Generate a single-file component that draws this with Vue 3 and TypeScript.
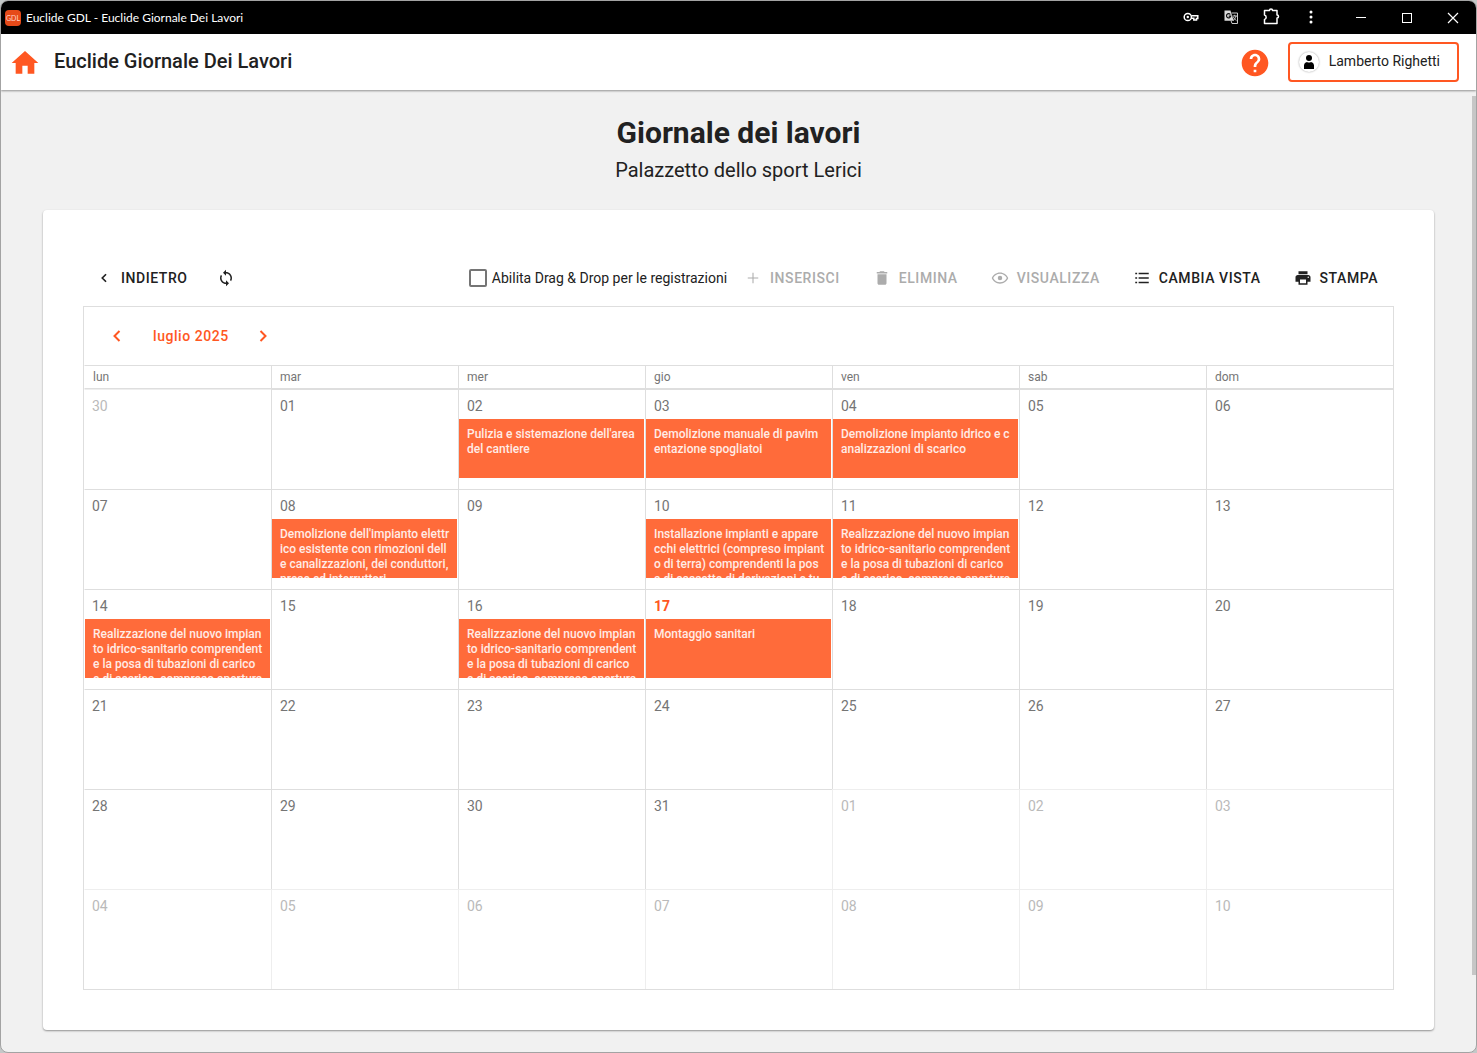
<script setup lang="ts">
import { ref } from 'vue'

interface Action {
  label: string
  icon: string
  disabled: boolean
}

interface Day {
  key: string
  label: string
  outside: boolean
  today: boolean
  entry?: string
}

const icons: Record<string, string> = {
  plus: 'M19 12.7h-6.3V19h-1.4v-6.3H5v-1.4h6.3V5h1.4v6.3H19z',
  trash: 'M6 19c0 1.1.9 2 2 2h8c1.1 0 2-.9 2-2V7H6v12zM19 4h-3.500l-1-1h-5l-1 1H5v2h14V4z',
  list: 'M3 5h2.500v2H3zM3 11h2.500v2H3zM3 17h2.500v2H3zM7.500 5H21v2H7.500zM7.500 11H21v2H7.500zM7.500 17H21v2H7.500z',
  print: 'M19 8H5c-1.660 0-3 1.340-3 3v6h4v4h12v-4h4v-6c0-1.660-1.340-3-3-3zm-3 11H8v-5h8v5zm3-7c-.55 0-1-.45-1-1s.45-1 1-1 1 .45 1 1-.45 1-1 1zm-1-9H6v4h12V3z',
  eye: 'M12 4.500C7 4.500 2.730 7.610 1 12c1.730 4.390 6 7.500 11 7.500s9.270-3.110 11-7.500c-1.730-4.390-6-7.500-11-7.500zm0 13.300c-3.900 0-7.400-2.200-9.100-5.800C4.600 8.400 8.100 6.200 12 6.200s7.400 2.200 9.100 5.800c-1.700 3.600-5.200 5.800-9.100 5.800zM12 9a3 3 0 1 0 0 6 3 3 0 0 0 0-6z',
}

const actions: Action[] = [
  { label: 'INSERISCI', icon: 'plus', disabled: true },
  { label: 'ELIMINA', icon: 'trash', disabled: true },
  { label: 'VISUALIZZA', icon: 'eye', disabled: true },
  { label: 'CAMBIA VISTA', icon: 'list', disabled: false },
  { label: 'STAMPA', icon: 'print', disabled: false },
]

const weekdays = ['lun', 'mar', 'mer', 'gio', 'ven', 'sab', 'dom']

const plumbing =
  'Realizzazione del nuovo impianto idrico-sanitario comprendente la posa di tubazioni di carico e di scarico, compreso apertura'

const entries: Record<number, string> = {
  2: "Pulizia e sistemazione dell'area del cantiere",
  3: 'Demolizione manuale di pavim\nentazione spogliatoi',
  4: 'Demolizione impianto idrico e canalizzazioni di scarico',
  8: "Demolizione dell'impianto elettrico esistente con rimozioni delle canalizzazioni, dei conduttori, prese ed interruttori",
  10: 'Installazione impianti e appare\ncchi elettrici (compreso impiant\no di terra) comprendenti la pos\na di cassette di derivazioni e tu',
  11: plumbing,
  14: plumbing,
  16: plumbing,
  17: 'Montaggio sanitari',
}

const month = 6
const today = 17

const weeks: Day[][] = Array.from({ length: 6 }, (_, w) =>
  Array.from({ length: 7 }, (_, d) => {
    const date = new Date(2025, month, w * 7 + d)
    const number = date.getDate()
    const outside = date.getMonth() !== month
    return {
      key: `${date.getMonth()}-${number}`,
      label: String(number).padStart(2, '0'),
      outside,
      today: !outside && number === today,
      entry: outside ? undefined : entries[number],
    }
  }),
)

const dragEnabled = ref(false)
</script>

<template>
  <div class="window">
    <div class="titlebar">
      <span class="app-badge">GDL</span>
      <span class="app-name">Euclide GDL - Euclide Giornale Dei Lavori</span>
      <div class="tb-group">
        <button class="tb-btn" type="button" aria-label="Password">
          <svg width="16" height="16" viewBox="0 0 16 16" fill="none" stroke="#fff" stroke-width="1.500">
            <circle cx="4.800" cy="8" r="3.600" />
            <circle cx="4.800" cy="8" r="1.200" fill="#fff" stroke="none" />
            <path d="M8.300 6.800h6.500v2.600h-1.300v1.700h-2.700V9.300H8.300" />
          </svg>
        </button>
        <button class="tb-btn" type="button" aria-label="Traduci">
          <svg width="16" height="16" viewBox="0 0 16 16">
            <path fill="#ddd" d="M1.500 1.500h6l3.200 10.200H1.500z" />
            <path fill="none" stroke="#ccc" d="M8.500 4h6v10.500H9l-1-2.800M9.500 7h4.500M11.700 5.800V7M13 7c-.4 2-1.500 3.500-3 4.500M10.500 8c.5 1.500 1.600 2.700 3 3.700" />
            <path fill="none" stroke="#111" stroke-width="1.200" d="M7.300 5.500A2.100 2.100 0 1 0 7.700 7.200H5.700" />
          </svg>
        </button>
        <button class="tb-btn" type="button" aria-label="Estensioni">
          <svg width="18" height="18" viewBox="0 0 18 18" fill="none" stroke="#fff" stroke-width="1.500" stroke-linejoin="round">
            <path d="M2.500 2.500h5a1.500 1.500 0 0 1 3 0H15v4.500a1.500 1.500 0 0 1 0 3V15.500H2.500v-4c2.200-.3 2.200-4.200 0-4.500z" />
          </svg>
        </button>
        <button class="tb-btn" type="button" aria-label="Menu">
          <svg width="16" height="16" viewBox="0 0 16 16" fill="#fff">
            <circle cx="8" cy="3" r="1.500" /><circle cx="8" cy="8" r="1.500" /><circle cx="8" cy="13" r="1.500" />
          </svg>
        </button>
      </div>
      <button class="tb-btn win" type="button" aria-label="Riduci a icona">
        <svg width="12" height="12" viewBox="0 0 12 12"><path d="M1 5.500h10" stroke="#fff" /></svg>
      </button>
      <button class="tb-btn win" type="button" aria-label="Ingrandisci">
        <svg width="12" height="12" viewBox="0 0 12 12"><rect x="1.500" y="1.500" width="9" height="9" fill="none" stroke="#fff" /></svg>
      </button>
      <button class="tb-btn win" type="button" aria-label="Chiudi">
        <svg width="12" height="12" viewBox="0 0 12 12"><path d="M1 1l10 10M11 1L1 11" stroke="#fff" stroke-width="1.200" /></svg>
      </button>
    </div>

    <header class="header">
      <a class="home" href="#" aria-label="Home">
        <svg width="32" height="32" viewBox="0 0 24 24" fill="#ff5722"><path d="M10 20v-6h4v6h5v-8h3L12 3 2 12h3v8z" /></svg>
      </a>
      <span class="header-title">Euclide Giornale Dei Lavori</span>
      <button class="help" type="button" aria-label="Aiuto">
        <svg width="32" height="32" viewBox="0 0 24 24" fill="#ff5722">
          <path d="M12 2C6.480 2 2 6.480 2 12s4.480 10 10 10 10-4.480 10-10S17.520 2 12 2zm1 17h-2v-2h2v2zm2.070-7.750l-.9.920C13.450 12.900 13 13.500 13 15h-2v-.5c0-1.100.45-2.100 1.170-2.830l1.240-1.260c.37-.36.59-.86.59-1.410 0-1.100-.9-2-2-2s-2 .9-2 2H8c0-2.210 1.790-4 4-4s4 1.790 4 4c0 .88-.36 1.680-.93 2.250z" />
        </svg>
      </button>
      <button class="user" type="button">
        <span class="avatar">
          <svg width="12" height="16" viewBox="0 0 12 16"><circle cx="6" cy="4" r="3" /><path d="M1 15v-3.500C1 9.500 2.500 8.300 4 8c1.200.7 2.800.7 4 0 1.500.3 3 1.500 3 3.500V15z" /></svg>
        </span>
        <span class="user-name">Lamberto Righetti</span>
      </button>
    </header>

    <main class="main">
      <h1>Giornale dei lavori</h1>
      <h2>Palazzetto dello sport Lerici</h2>

      <section class="card">
        <div class="toolbar">
          <button class="btn back" type="button">
            <svg width="18" height="18" viewBox="0 0 24 24"><path fill="none" stroke="currentColor" stroke-width="2.200" d="M14.700 7l-5 5 5 5" /></svg>
            <span>INDIETRO</span>
          </button>
          <button class="btn refresh" type="button" aria-label="Aggiorna">
            <svg width="18" height="18" viewBox="0 0 24 24" fill="currentColor"><path d="M12 4V1L8 5l4 4V6c3.310 0 6 2.690 6 6 0 1.010-.25 1.970-.7 2.800l1.460 1.460C19.540 15.030 20 13.570 20 12c0-4.420-3.580-8-8-8zm0 14c-3.310 0-6-2.690-6-6 0-1.010.25-1.970.7-2.800L5.240 7.740C4.460 8.970 4 10.430 4 12c0 4.420 3.580 8 8 8v3l4-4-4-4v3z" /></svg>
          </button>
          <label class="check" for="drag">
            <input id="drag" v-model="dragEnabled" type="checkbox" />
            <span>Abilita Drag &amp; Drop per le registrazioni</span>
          </label>
          <button v-for="a in actions" :key="a.label" class="btn" type="button" :disabled="a.disabled">
            <svg width="18" height="18" viewBox="0 0 24 24" fill="currentColor"><path :d="icons[a.icon]" /></svg>
            <span>{{ a.label }}</span>
          </button>
        </div>

        <div class="calendar">
          <div class="nav">
            <button class="nav-btn" type="button" aria-label="Mese precedente">
              <svg width="18" height="18" viewBox="0 0 18 18"><path d="M11.500 4L6.500 9l5 5" /></svg>
            </button>
            <button class="nav-btn caption" type="button">luglio 2025</button>
            <button class="nav-btn" type="button" aria-label="Mese successivo">
              <svg width="18" height="18" viewBox="0 0 18 18"><path d="M6.500 4l5 5-5 5" /></svg>
            </button>
          </div>
          <table>
            <thead>
              <tr>
                <th v-for="w in weekdays" :key="w" scope="col">{{ w }}</th>
              </tr>
            </thead>
            <tbody>
              <tr v-for="(week, i) in weeks" :key="i">
                <td v-for="day in week" :key="day.key" :class="{ outside: day.outside, today: day.today }">
                  <div class="date">{{ day.label }}</div>
                  <div v-if="day.entry" class="entry">{{ day.entry }}</div>
                </td>
              </tr>
            </tbody>
          </table>
        </div>
      </section>
      <div class="scroll-thumb"></div>
    </main>
  </div>
</template>

<style>
body {
  margin: 0;
  background: #c4c8c8;
}
</style>

<style scoped>
.window {
  box-sizing: border-box;
  min-height: 100vh;
  display: flex;
  flex-direction: column;
  border: 1px solid #a3a3a3;
  border-radius: 8px;
  overflow: hidden;
  background: #f1f1f1;
  color: #212121;
  font-family: Roboto, 'Liberation Sans', sans-serif;
  font-size: 14px;
}

button {
  border: 0;
  padding: 0;
  background: none;
  color: inherit;
  font: inherit;
  display: flex;
  align-items: center;
  justify-content: center;
}

svg {
  display: block;
  flex: none;
}

.titlebar {
  height: 33px;
  display: flex;
  align-items: center;
  background: #000;
  color: #fff;
  font-family: Lato, 'Open Sans', sans-serif;
  font-size: 12px;
}

.app-badge {
  width: 16px;
  height: 16px;
  margin: 0 5px 0 4px;
  border-radius: 4px;
  background: #e64a19;
  color: #ffd9cc;
  font-size: 7px;
  line-height: 16px;
  text-align: center;
}

.app-name {
  flex: 1;
}

.tb-group {
  display: flex;
  margin-right: 7px;
  padding-bottom: 1px;
}

.tb-btn {
  width: 40px;
  height: 32px;
}

.tb-btn.win {
  width: 46px;
}

.header {
  position: relative;
  height: 56px;
  display: flex;
  align-items: center;
  padding: 0 17px 0 8px;
  background: #fff;
  box-shadow: 0 1px 2px rgba(0, 0, 0, 0.4);
}

.home,
.help {
  padding-top: 1px;
}

.header-title {
  flex: 1;
  margin-left: 13px;
  padding-bottom: 2px;
  font-size: 20px;
  font-weight: 500;
}

.help {
  margin-right: 17px;
}

.user {
  box-sizing: border-box;
  height: 40px;
  padding: 0 17px 0 9px;
  gap: 10px;
  border: 2px solid #ff5722;
  border-radius: 4px;
}

.user-name {
  padding-bottom: 2px;
}

.avatar {
  width: 20px;
  height: 20px;
  display: flex;
  align-items: center;
  justify-content: center;
  border-radius: 50%;
  box-shadow: 0 0 2px rgba(0, 0, 0, 0.4);
}

.main {
  position: relative;
  flex: 1;
  padding: 25px 42px 21px;
}

h1,
h2 {
  margin: 0;
  text-align: center;
}

h1 {
  font-size: 30px;
  line-height: 36px;
  font-weight: 700;
}

h2 {
  margin: 7px 0 28px;
  font-size: 20px;
  line-height: 24px;
  font-weight: 400;
}

.card {
  padding: 40px;
  border-radius: 4px;
  background: #fff;
  box-shadow: 0 1px 2px rgba(0, 0, 0, 0.4);
}

.toolbar {
  height: 56px;
  display: flex;
  align-items: center;
  gap: 1px;
}

.btn {
  height: 36px;
  padding: 0 16px;
  gap: 8px;
  font-weight: 500;
  letter-spacing: 0.04em;
}

.btn:disabled {
  color: #acacac;
}

.back {
  padding-left: 12px;
}

.refresh {
  padding: 0 12px;
}

.check {
  display: flex;
  align-items: center;
  gap: 5px;
  margin-left: auto;
}

.check input {
  appearance: none;
  box-sizing: border-box;
  width: 18px;
  height: 18px;
  margin: 0;
  border: 2px solid #757575;
  border-radius: 2px;
}

.check input:checked {
  background: #ff5722;
}

.calendar {
  border: 1px solid #dedede;
}

.nav {
  height: 58px;
  display: flex;
  align-items: center;
  padding-left: 15px;
  color: #ff5722;
}

.nav-btn {
  width: 36px;
  height: 36px;
}

.nav-btn svg {
  fill: none;
  stroke: currentColor;
  stroke-width: 2;
}

.caption {
  width: auto;
  padding: 0 16px 0 18px;
  font-weight: 500;
  letter-spacing: 0.04em;
}

table {
  width: 100%;
  table-layout: fixed;
  border-collapse: separate;
  border-spacing: 0;
}

th {
  box-sizing: border-box;
  height: 24px;
  padding: 0 8px;
  border: solid #dedede;
  border-width: 1px 0 1px 1px;
  color: #757575;
  font-size: 12px;
  line-height: 14px;
  font-weight: 400;
  text-align: left;
}

td {
  box-sizing: border-box;
  height: 100px;
  padding: 0;
  border: solid #dedede;
  border-width: 1px 0 0 1px;
  color: #757575;
  vertical-align: top;
}

.outside {
  border-color: #eee;
  color: #bababa;
}

th:first-child,
td:first-child {
  border-left-color: transparent;
}

.date {
  height: 29px;
  padding-left: 8px;
  line-height: 33px;
}

td:first-child .date {
  padding-left: 7px;
}

.today .date {
  color: #ff5722;
  font-weight: 700;
}

.entry {
  box-sizing: border-box;
  height: 59px;
  margin-right: 1px;
  padding: 8px 6px 0 8px;
  overflow: hidden;
  background: #ff6b3a;
  color: #ffece6;
  font-size: 12px;
  line-height: 15px;
  font-weight: 500;
  white-space: pre-line;
  word-break: break-all;
}

.scroll-thumb {
  position: absolute;
  top: 6px;
  right: 0;
  bottom: 77px;
  width: 4px;
  background: #c6c6c6;
}
</style>
